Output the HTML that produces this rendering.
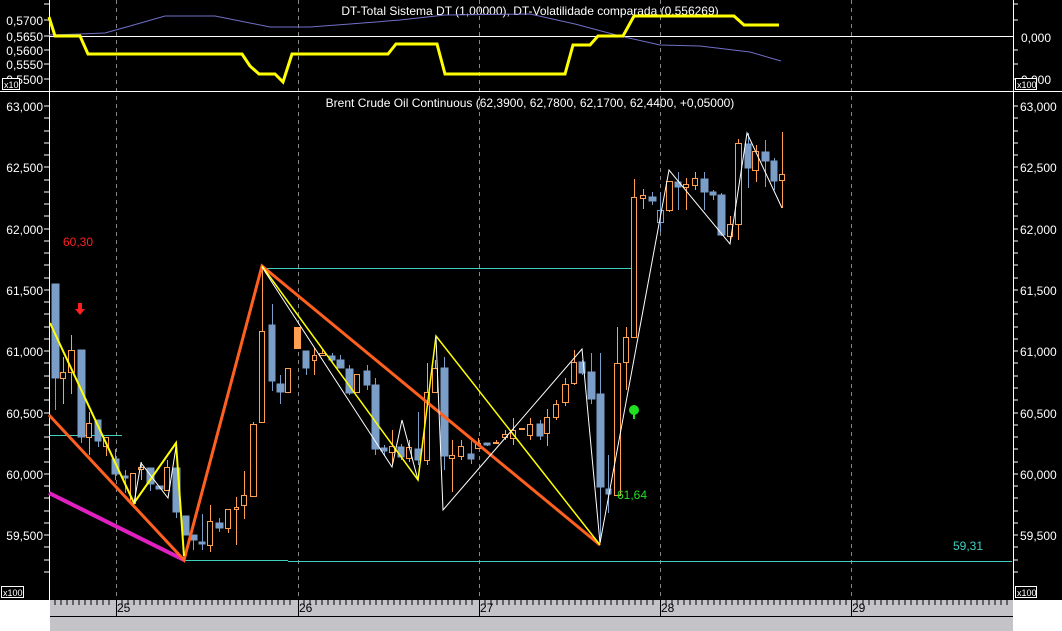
<!DOCTYPE html>
<html><head><meta charset="utf-8"><style>
html,body{margin:0;padding:0;background:#fff;}
svg{display:block;font-family:"Liberation Sans",sans-serif;}
</style></head><body>
<svg width="1062" height="631" viewBox="0 0 1062 631" xmlns="http://www.w3.org/2000/svg">
<rect x="0" y="0" width="1062" height="600" fill="#000"/>
<rect x="50" y="600" width="963" height="31" fill="#c4c4c8"/>
<line x1="50" y1="616.5" x2="1013" y2="616.5" stroke="#000" stroke-width="1"/>
<g stroke="#000" stroke-width="1">
<path d="M55 600v5M61 600v5M67 600v5M73 600v5M79 600v5M85 600v5M91 600v5M97 600v5M103 600v5M109 600v5M122 600v5M128 600v5M134 600v5M140 600v5M146 600v5M152 600v5M158 600v5M164 600v5M170 600v5M176 600v5M182 600v5M188 600v5M194 600v5M200 600v5M206 600v5M212 600v5M218 600v5M224 600v5M230 600v5M236 600v5M242 600v5M248 600v5M254 600v5M260 600v5M266 600v5M272 600v5M278 600v5M284 600v5M290 600v5M304 600v5M310 600v5M316 600v5M322 600v5M328 600v5M334 600v5M340 600v5M346 600v5M352 600v5M358 600v5M364 600v5M370 600v5M376 600v5M382 600v5M388 600v5M394 600v5M400 600v5M406 600v5M412 600v5M418 600v5M424 600v5M430 600v5M436 600v5M442 600v5M448 600v5M454 600v5M460 600v5M466 600v5M472 600v5M485 600v5M491 600v5M497 600v5M503 600v5M509 600v5M515 600v5M521 600v5M527 600v5M533 600v5M539 600v5M545 600v5M551 600v5M557 600v5M563 600v5M569 600v5M575 600v5M581 600v5M587 600v5M593 600v5M599 600v5M605 600v5M611 600v5M617 600v5M623 600v5M629 600v5M635 600v5M641 600v5M647 600v5M653 600v5M666 600v5M672 600v5M678 600v5M684 600v5M690 600v5M696 600v5M702 600v5M708 600v5M714 600v5M720 600v5M726 600v5M732 600v5M738 600v5M744 600v5M750 600v5M756 600v5M762 600v5M768 600v5M774 600v5M780 600v5M786 600v5M792 600v5M798 600v5M804 600v5M810 600v5M816 600v5M822 600v5M828 600v5M834 600v5M840 600v5M846 600v5M857 600v5M863 600v5M869 600v5M875 600v5M881 600v5M887 600v5M893 600v5M899 600v5M905 600v5M911 600v5M917 600v5M923 600v5M929 600v5M935 600v5M941 600v5M947 600v5M953 600v5M959 600v5M965 600v5M971 600v5M977 600v5M983 600v5M989 600v5M995 600v5M1001 600v5M1007 600v5"/>
<path d="M116.5 600v16M298.5 600v16M479.5 600v16M660.5 600v16M851.5 600v16"/>
</g>
<g font-size="12" fill="#000"><text x="117" y="612">25</text><text x="299" y="612">26</text><text x="480" y="612">27</text><text x="661" y="612">28</text><text x="852" y="612">29</text></g>

<g stroke="#888" stroke-width="1" stroke-dasharray="4,4">
<path d="M116.5 0V600M298.5 0V600M479.5 0V600M660.5 0V600M851.5 0V600"/>
</g>
<g stroke="#fff" stroke-width="1">
<path d="M49.5 0V600M1013.5 0V600M0 91.5H1062M49 36.5H1013"/>
<path d="M44 4h5M44 20h5M44 36h5M44 50h5M44 64h5M44 79h5M1013 4h5M1013 20h5M1013 50h5M1013 64h5M1013 79h5"/>
<path d="M44 106h5M44 118h5M44 131h5M44 143h5M44 155h5M44 167h5M44 180h5M44 192h5M44 204h5M44 216h5M44 229h5M44 241h5M44 253h5M44 265h5M44 278h5M44 290h5M44 302h5M44 314h5M44 327h5M44 339h5M44 351h5M44 363h5M44 376h5M44 388h5M44 400h5M44 413h5M44 425h5M44 437h5M44 449h5M44 462h5M44 474h5M44 486h5M44 498h5M44 511h5M44 523h5M44 535h5M44 547h5M44 560h5M44 572h5"/>
<path d="M1013 106h5M1013 118h5M1013 131h5M1013 143h5M1013 155h5M1013 167h5M1013 180h5M1013 192h5M1013 204h5M1013 216h5M1013 229h5M1013 241h5M1013 253h5M1013 265h5M1013 278h5M1013 290h5M1013 302h5M1013 314h5M1013 327h5M1013 339h5M1013 351h5M1013 363h5M1013 376h5M1013 388h5M1013 400h5M1013 413h5M1013 425h5M1013 437h5M1013 449h5M1013 462h5M1013 474h5M1013 486h5M1013 498h5M1013 511h5M1013 523h5M1013 535h5M1013 547h5M1013 560h5M1013 572h5"/>
</g>
<g font-size="12" fill="#fff" text-anchor="end">
<text x="43" y="25">0,5700</text><text x="43" y="41">0,5650</text><text x="43" y="55">0,5600</text><text x="43" y="69">0,5550</text><text x="43" y="84">0,5500</text>
<text x="43" y="111">63,000</text><text x="43" y="172">62,500</text><text x="43" y="234">62,000</text><text x="43" y="295">61,500</text><text x="43" y="356">61,000</text><text x="43" y="418">60,500</text><text x="43" y="479">60,000</text><text x="43" y="540">59,500</text>
</g>
<g font-size="12" fill="#fff">
<text x="1021" y="42">0,000</text><text x="1021" y="84">0,000</text>
<text x="1020" y="111">63,000</text><text x="1020" y="172">62,500</text><text x="1020" y="234">62,000</text><text x="1020" y="295">61,500</text><text x="1020" y="356">61,000</text><text x="1020" y="418">60,500</text><text x="1020" y="479">60,000</text><text x="1020" y="540">59,500</text>
</g>
<g font-size="9" fill="#fff" stroke="#fff" stroke-width="1">
<rect x="2.5" y="78.5" width="17" height="11" fill="#000"/><rect x="1015.5" y="78.5" width="21" height="11" fill="#000"/>
<rect x="1.5" y="586.5" width="22" height="11" fill="#000"/><rect x="1015.5" y="586.5" width="21" height="11" fill="#000"/>
</g>
<g font-size="9" fill="#fff"><text x="4" y="88">x10</text><text x="1017" y="88">x100</text><text x="3" y="596">x100</text><text x="1017" y="596">x100</text></g>

<g font-size="12" fill="#fff" text-anchor="middle">
<text x="530" y="15">DT-Total Sistema DT (1,00000), DT-Volatilidade comparada (0,556269)</text>
<text x="530" y="107">Brent Crude Oil Continuous (62,3900, 62,7800, 62,1700, 62,4400, +0,05000)</text>
</g>

<polyline fill="none" stroke="#7070c8" stroke-width="1" points="49,35 80,34 105,33 130,26 165,16 215,16 235,20 270,27 310,27 350,24 400,20 445,15 530,14 575,24 620,36 660,45 700,46 750,52 781,61"/>
<polyline fill="none" stroke="#ffff00" stroke-width="3" points="49,17 55,36 80,36 88,54 242,54 250,66 259,74 275,74 283,82 292,54 388,54 396,44 437,44 445,74 565,74 573,45 590,45 598,36 623,36 634,16 734,16 744,25 779,25"/>

<g stroke="#40d0c0" stroke-width="1" fill="none">
<path d="M49 435.5H122M262 268.5H635M184 560.5H288M288 561.5H1012"/>
</g>

<g stroke="#7b9ec8" stroke-width="1" fill="#7b9ec8">
<path d="M55.5 378V410M81.5 437V443M98.5 441V447M115.5 449V480M125.5 470V493M150.5 484V491M176.5 512V518M193.5 540V550M202.5 514V550M219.5 518V532M272.5 304V391M280.5 375V404M306.5 368V375M332.5 353V362M340.5 355V364M349.5 365V395M367.5 365V390M375.5 378V455M384.5 445V456M401.5 444V460M418.5 412V465M444.5 357V470M471.5 441V464M487.5 444V446M540.5 420V440M582.5 360V375M591.5 353V404M600.5 353V542M608.5 455V513M652.5 192V205M660.5 193V232M678.5 172V210M704.5 172V210M713.5 190V200M721.5 193V236M748.5 133V188M765.5 140V187M774.5 158V190"/>
<rect x="52" y="284" width="7" height="94"/><rect x="78" y="350" width="7" height="87"/><rect x="95" y="420" width="6" height="21"/><rect x="112" y="459" width="7" height="15"/><rect x="122" y="476" width="6" height="2"/><rect x="147" y="468" width="7" height="16"/><rect x="156" y="486" width="7" height="3"/><rect x="173" y="468" width="7" height="44"/><rect x="183" y="516" width="6" height="19"/><rect x="191" y="535" width="6" height="5"/><rect x="199" y="542" width="6" height="2"/><rect x="216" y="523" width="7" height="5"/>
<rect x="269" y="325" width="6" height="56"/><rect x="277" y="384" width="7" height="8"/><rect x="303" y="351" width="6" height="17"/><rect x="329" y="356" width="6" height="4"/><rect x="337" y="360" width="7" height="8"/><rect x="346" y="369" width="7" height="24"/><rect x="364" y="371" width="6" height="14"/><rect x="372" y="385" width="7" height="64"/><rect x="381" y="448" width="6" height="3"/><rect x="398" y="447" width="6" height="10"/><rect x="415" y="449" width="6" height="11"/><rect x="441" y="368" width="7" height="88"/><rect x="468" y="454" width="6" height="5"/><rect x="484" y="443" width="6" height="2"/><rect x="537" y="424" width="6" height="12"/><rect x="579" y="362" width="6" height="11"/><rect x="588" y="372" width="7" height="27"/><rect x="597" y="394" width="7" height="93"/><rect x="606" y="489" width="5" height="5"/>
<rect x="649" y="197" width="7" height="4"/><rect x="675" y="182" width="6" height="5"/><rect x="701" y="179" width="7" height="13"/><rect x="710" y="192" width="6" height="3"/><rect x="718" y="195" width="7" height="40"/><rect x="745" y="144" width="6" height="24"/><rect x="762" y="152" width="7" height="9"/><rect x="771" y="161" width="6" height="20"/>
</g>
<rect x="657.5" y="210.5" width="6" height="12" fill="none" stroke="#7b9ec8"/>
<g stroke="#ffa050" stroke-width="1" fill="#000">
<path d="M63.5 357V404M71.5 335V394M89.5 412V455M106.5 437V456M133.5 503V508M141.5 462V480M167.5 460V485M210.5 505V552M228.5 510V533M236.5 497V545M244.5 471V519M262.5 267V331M253.5 422V426M288.5 368V392M314.5 348V375M322.5 350V356M392.5 430V465M409.5 440V462M427.5 363V465M435.5 360V370M452.5 440V492M461.5 440V460M478.5 438V446M496.5 440V444M505.5 430V440M513.5 418V445M530.5 418V440M547.5 409V446M556.5 400V420M565.5 378V406M574.5 350V385M617.5 327V495M626.5 327V390M634.5 179V330M643.5 189V209M669.5 181V212M686.5 178V210M695.5 172V190M730.5 216V240M738.5 139V240M756.5 145V182M782.5 132V208"/>
<rect x="60.5" y="372.5" width="5" height="6"/><rect x="68.5" y="350.5" width="6" height="22"/><rect x="86.5" y="423.5" width="5" height="14"/><rect x="103.5" y="437.5" width="5" height="9"/><rect x="130.5" y="473.5" width="5" height="30"/><rect x="138.5" y="467.5" width="5" height="2"/><rect x="164.5" y="467.5" width="5" height="23"/><rect x="207.5" y="521.5" width="5" height="24"/><rect x="225.5" y="509.5" width="5" height="19"/><rect x="234.5" y="507.5" width="4" height="2"/><rect x="241.5" y="495.5" width="5" height="10"/><rect x="250.5" y="424.5" width="6" height="72"/><rect x="259.5" y="331.5" width="5" height="91"/><rect x="285.5" y="368.5" width="5" height="24"/><rect x="312.5" y="355.5" width="4" height="5"/><rect x="319.5" y="353.5" width="6" height="2"/><rect x="354.5" y="374.5" width="5" height="18"/><rect x="389.5" y="446.5" width="5" height="6"/><rect x="406.5" y="447.5" width="5" height="11"/><rect x="424.5" y="392.5" width="5" height="68"/><rect x="432.5" y="368.5" width="5" height="24"/><rect x="449.5" y="455.5" width="5" height="3"/><rect x="458.5" y="446.5" width="5" height="10"/><rect x="475.5" y="443.5" width="5" height="5"/><rect x="493.5" y="442.5" width="5" height="1"/><rect x="502.5" y="434.5" width="5" height="3"/><rect x="510.5" y="430.5" width="5" height="8"/><rect x="519.5" y="428.5" width="5" height="1"/><rect x="527.5" y="424.5" width="5" height="11"/><rect x="544.5" y="417.5" width="5" height="16"/><rect x="553.5" y="404.5" width="5" height="13"/><rect x="562.5" y="384.5" width="6" height="18"/><rect x="571.5" y="362.5" width="5" height="21"/><rect x="614.5" y="363.5" width="6" height="132"/><rect x="623.5" y="337.5" width="5" height="25"/><rect x="631.5" y="197.5" width="5" height="140"/><rect x="640.5" y="195.5" width="5" height="3"/><rect x="666.5" y="181.5" width="6" height="29"/><rect x="683.5" y="184.5" width="5" height="3"/><rect x="692.5" y="178.5" width="5" height="7"/><rect x="727.5" y="224.5" width="5" height="12"/><rect x="735.5" y="143.5" width="6" height="81"/><rect x="752.5" y="151.5" width="6" height="19"/><rect x="779.5" y="174.5" width="5" height="6"/>
</g>
<rect x="294" y="327" width="7" height="22" fill="#ffa050"/>

<line x1="49" y1="493" x2="184" y2="560" stroke="#e020c0" stroke-width="4"/>
<polyline fill="none" stroke="#ff6020" stroke-width="3" points="49,415 184,560 262,266 600,545"/>
<polyline fill="none" stroke="#ffff00" stroke-width="2" points="50,323 134,503 176,443 184,556"/>
<polyline fill="none" stroke="#ffff00" stroke-width="1.5" points="262,266 418,480 436,336 600,545"/>
<polyline fill="none" stroke="#fff" stroke-width="1" points="134,503 141,463 168,498 176,447"/>
<polyline fill="none" stroke="#fff" stroke-width="1" points="262,267 392,467 402,420 418,480"/>
<polyline fill="none" stroke="#fff" stroke-width="1" points="436,337 443,510 582,349 600,543 669,170 730,244 747,133 782,208"/>

<text x="63" y="246" font-size="12" fill="#ff2020">60,30</text>
<path d="M78 303h4v6h3l-5 6l-5-6h3z" fill="#ff2020"/>
<text x="617" y="499" font-size="12" fill="#20e020">61,64</text>
<circle cx="634" cy="410" r="5" fill="#20e020"/><rect x="633" y="414" width="2" height="5" fill="#20e020"/>
<text x="953" y="550" font-size="12" fill="#40d0c0">59,31</text>
</svg>
</body></html>
